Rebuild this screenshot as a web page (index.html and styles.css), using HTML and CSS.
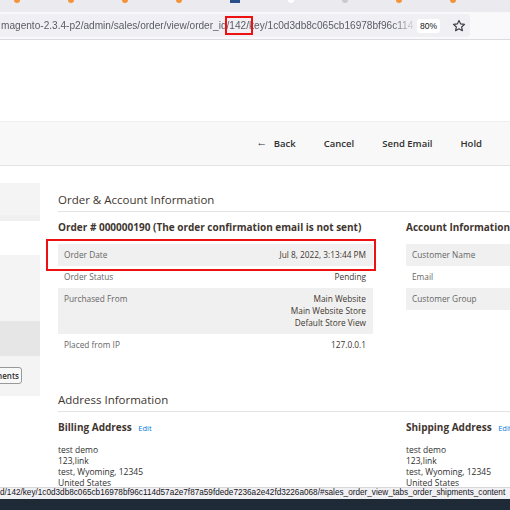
FILE: index.html
```html
<!DOCTYPE html>
<html lang="en">
<head>
    <meta charset="UTF-8">
    <title>Order # 000000190 / Orders / Sales / Magento Admin</title>
    <link rel="stylesheet" href="styles.css">
</head>
<body>

    <div class="tabstrip">
        <span class="fav orange"></span>
        <span class="fav orange"></span>
        <span class="fav orange"></span>
        <span class="fav orange"></span>
        <span class="fav blue"></span>
        <span class="fav white"></span>
        <span class="fav grey"></span>
        <span class="fav orange"></span>
        <span class="fav orange"></span>
    </div>

    <div class="toolbar">
        <div class="urlbar">
            <div class="url">magento-2.3.4-p2/admin/sales/order/view/order_id/<span class="mark">142/</span>key/1c0d3db8c065cb16978bf96c114</div>
            <span class="zoom">80%</span>
            <svg class="star" width="14" height="14" viewBox="0 0 16 16">
                <path d="M8 1.6l1.9 4 4.4.5-3.3 3 .9 4.3L8 11.2l-3.9 2.2.9-4.3-3.3-3 4.4-.5z" fill="none" stroke="#3a3a44" stroke-width="1.3" stroke-linejoin="round"/>
            </svg>
        </div>
    </div>

    <div class="page">
        <div class="actions">
            <button class="act"><span class="arrow">&#8592;</span> Back</button>
            <button class="act">Cancel</button>
            <button class="act">Send Email</button>
            <button class="act">Hold</button>
        </div>

        <div class="layout">
            <div class="sidebar">
                <div class="side-top"></div>
                <div class="side-tabs">
                    <div class="side-tab"></div>
                    <div class="side-tab active"></div>
                    <div class="side-tab last"><span class="side-btn">Shipments</span></div>
                </div>
            </div>

            <div class="main">
                <h2 class="section-title">Order &amp; Account Information</h2>
                <div class="cols">
                    <div class="col">
                        <h3 class="sub">Order # 000000190 (The order confirmation email is not sent)</h3>
                        <div class="info">
                            <div class="row hl"><span class="label">Order Date</span><span class="value">Jul 8, 2022, 3:13:44 PM</span></div>
                            <div class="row"><span class="label">Order Status</span><span class="value">Pending</span></div>
                            <div class="row"><span class="label">Purchased From</span><span class="value">Main Website<br>Main Website Store<br>Default Store View</span></div>
                            <div class="row"><span class="label">Placed from IP</span><span class="value">127.0.0.1</span></div>
                        </div>
                    </div>
                    <div class="col">
                        <h3 class="sub">Account Information</h3>
                        <div class="info">
                            <div class="row"><span class="label">Customer Name</span><span class="value"></span></div>
                            <div class="row"><span class="label">Email</span><span class="value"></span></div>
                            <div class="row"><span class="label">Customer Group</span><span class="value"></span></div>
                        </div>
                    </div>
                </div>

                <h2 class="section-title addr-title">Address Information</h2>
                <div class="cols">
                    <div class="col">
                        <h3 class="sub">Billing Address <a class="edit" href="#">Edit</a></h3>
                        <address>test demo<br>123,link<br>test, Wyoming, 12345<br>United States</address>
                    </div>
                    <div class="col">
                        <h3 class="sub">Shipping Address <a class="edit" href="#">Edit</a></h3>
                        <address>test demo<br>123,link<br>test, Wyoming, 12345<br>United States</address>
                    </div>
                </div>
            </div>
        </div>
    </div>

    <div class="statusbar">d/142/key/1c0d3db8c065cb16978bf96c114d57a2e7f87a59fdede7236a2e42fd3226a068/#sales_order_view_tabs_order_shipments_content</div>
    <div class="taskbar"></div>

</body>
</html>
```

FILE: styles.css
```css
html, body {
    margin: 0;
    height: 100%;
}
body {
    position: relative;
    overflow: hidden;
    background: #fff;
    font-family: "Open Sans", Arial, sans-serif;
    color: #303030;
}
.tabstrip {
    height: 12px;
    background: #ebebef;
    display: flex;
    gap: 48px;
    padding-left: 14px;
    overflow: hidden;
}
.fav {
    width: 6px;
    height: 3px;
    border-radius: 0 0 3px 3px;
    flex: none;
}
.fav.orange { background: #f5933b; }
.fav.blue { background: #2a4f8a; width: 10px; border-radius: 0; }
.fav.white { background: #fff; }
.fav.grey { background: #c9c9cf; }
.toolbar {
    height: 28px;
    background: #f9f9fb;
    border-bottom: 1px solid #dcdce0;
    padding-top: 2px;
    box-sizing: border-box;
}
.urlbar {
    width: 470px;
    height: 23px;
    background: #f0f0f4;
    border-radius: 0 4px 4px 0;
    display: flex;
    align-items: center;
}
.url {
    flex: 1;
    overflow: hidden;
    white-space: nowrap;
    font-family: "Liberation Sans", Arial, sans-serif;
    font-size: 10.1px;
    line-height: 23px;
    color: #5b5b66;
    padding-left: 1px;
    -webkit-mask-image: linear-gradient(to right, #000 392px, transparent 418px);
}
.mark {
    outline: 2px solid #ee1111;
    outline-offset: 2px;
}
.zoom {
    background: #fff;
    border-radius: 3px;
    font-size: 8.5px;
    padding: 2px 3px;
    margin: 0 12px 0 4px;
    color: #15141a;
    font-family: "Liberation Sans", Arial, sans-serif;
}
.star {
    margin-right: 4px;
}
.page {
    padding-top: 81px;
}
.actions {
    height: 45px;
    background: #f8f8f8;
    border-top: 1px solid #efefef;
    border-bottom: 1px solid #e3e3e3;
    box-sizing: border-box;
    display: flex;
    align-items: center;
    justify-content: flex-end;
    padding-right: 28px;
    gap: 28px;
}
.act {
    border: 0;
    background: none;
    padding: 0;
    font-family: "Open Sans", sans-serif;
    font-weight: 600;
    font-size: 9.5px;
    color: #303030;
}
.arrow {
    display: inline-block;
    font-weight: 400;
    font-size: 11px;
    line-height: 10px;
    vertical-align: 1px;
    margin-right: 4px;
}
.layout {
    display: flex;
    gap: 18px;
    margin-top: 17px;
}
.sidebar {
    width: 40px;
    flex: none;
}
.side-top {
    height: 38px;
    background: #f4f4f4;
    border-bottom: 6px solid #f0f0f0;
    box-sizing: border-box;
}
.side-tabs {
    margin-top: 34px;
    background: #f4f4f4;
}
.side-tab {
    height: 66px;
}
.side-tab.active {
    height: 35px;
    background: #e6e6e6;
}
.side-tab.last {
    height: 40px;
    display: flex;
    justify-content: flex-end;
    align-items: flex-start;
    padding-top: 11px;
    box-sizing: border-box;
    overflow: hidden;
}
.side-btn {
    font-size: 8px;
    font-weight: 600;
    border: 1px solid #999;
    border-radius: 3px;
    background: #f8f8f8;
    padding: 2px 2px;
    margin-right: 18px;
    white-space: nowrap;
}
.main {
    flex: none;
    width: 680px;
    padding-top: 9px;
}
.section-title {
    margin: 0;
    font-size: 11.5px;
    font-weight: 400;
    color: #41362f;
    line-height: 16px;
    padding-bottom: 3px;
    border-bottom: 1px solid #e3e3e3;
}
.addr-title {
    margin-top: 36px;
}
.cols {
    display: flex;
    gap: 33px;
}
.col {
    width: 315px;
}
.sub {
    margin: 8px 0 10px;
    font-size: 10px;
    font-weight: 700;
    color: #41362f;
    line-height: 14px;
    white-space: nowrap;
}
.info {
    font-size: 8.3px;
    line-height: 12px;
}
.row {
    position: relative;
    display: flex;
    justify-content: space-between;
    padding: 5px 7px 5px 6px;
}
.row:nth-child(odd) {
    background: #f0f0f0;
}
.row.hl::after {
    content: "";
    position: absolute;
    left: -12px;
    right: -3px;
    top: -5px;
    bottom: -5px;
    border: 2px solid #ee1111;
}
.label {
    color: #666;
}
.value {
    text-align: right;
    color: #41362f;
}
.edit {
    font-size: 7.5px;
    font-weight: 400;
    color: #007bdb;
    text-decoration: none;
    margin-left: 4px;
}
address {
    font-style: normal;
    font-size: 8.5px;
    line-height: 11px;
    color: #303030;
    margin-top: -1px;
}
.statusbar {
    position: absolute;
    left: 0;
    right: 0;
    bottom: 11px;
    height: 11px;
    background: #f1f1f4;
    border-top: 1px solid #d8d8dc;
    font-family: "Liberation Sans", Arial, sans-serif;
    font-size: 8.2px;
    line-height: 10px;
    color: #15141a;
    white-space: nowrap;
    overflow: hidden;
}
.taskbar {
    position: absolute;
    left: 0;
    right: 0;
    bottom: 0;
    height: 11px;
    background: #1e2b36;
}
```
